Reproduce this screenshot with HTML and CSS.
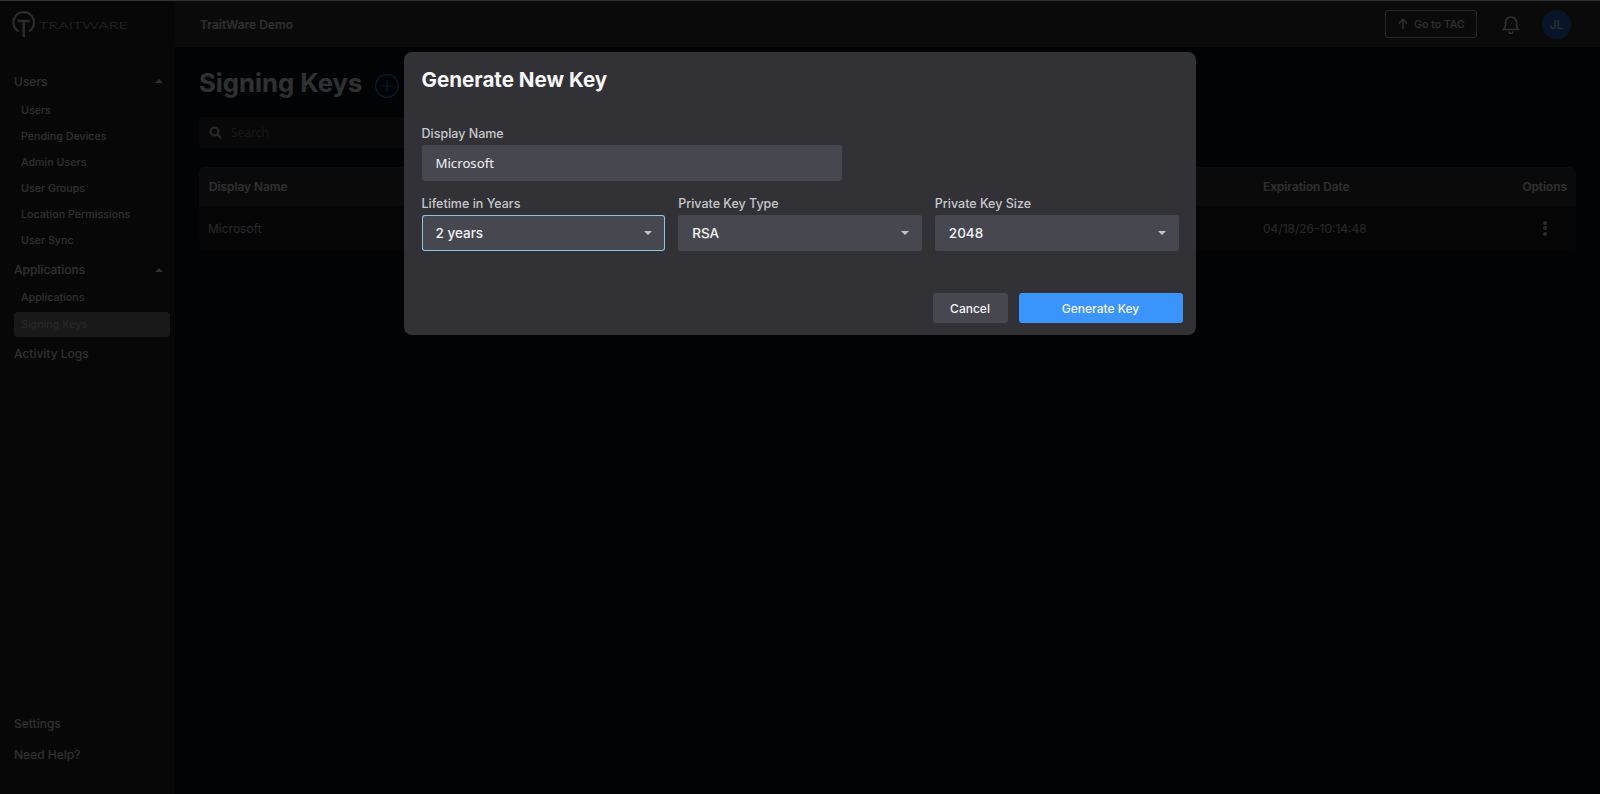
FILE: index.html
```html
<!DOCTYPE html>
<html lang="en">
<head>
<meta charset="utf-8">
<title>Signing Keys</title>
<link rel="stylesheet" href="styles.css">
</head>
<body>
<div class="app">
  <aside class="sidebar">
    <div class="logo">
      <svg class="logo-mark" width="25" height="28" viewBox="0 0 25 28" fill="none" stroke="currentColor">
        <path d="M6.600 20.400A10.300 10.300 0 1 1 16.800 20.400" stroke-width="2.200"/>
        <path d="M5.700 10H17.700M11.700 10V26" stroke-width="2.600"/>
      </svg>
      <span class="logo-text">TRAITWARE</span>
    </div>
    <nav class="nav">
      <div class="nav-head nav-head-first">Users<span class="caret"></span></div>
      <a class="nav-item">Users</a>
      <a class="nav-item">Pending Devices</a>
      <a class="nav-item">Admin Users</a>
      <a class="nav-item">User Groups</a>
      <a class="nav-item">Location Permissions</a>
      <a class="nav-item">User Sync</a>
      <div class="nav-head nav-head-next">Applications<span class="caret"></span></div>
      <a class="nav-item">Applications</a>
      <a class="nav-item nav-active">Signing Keys</a>
      <div class="nav-head nav-head-last">Activity Logs</div>
    </nav>
    <div class="nav-foot">
      <div class="nav-head">Settings</div>
      <div class="nav-head">Need Help?</div>
    </div>
  </aside>
  <div class="content">
    <header class="topbar">
      <span class="org">TraitWare Demo</span>
      <div class="top-actions">
        <button class="tac-btn">
          <svg width="12" height="12" viewBox="0 0 12 12" fill="none" stroke="currentColor" stroke-width="1.500"><path d="M6 11V1.500M1.800 5.500 6 1.300l4.200 4.200"/></svg>
          Go to TAC
        </button>
        <svg class="bell" width="20" height="20" viewBox="0 0 20 20" fill="none" stroke="currentColor" stroke-width="1.600"><path d="M2.500 15.500c1.500-1.500 2-2.500 2-5V8.500a5.500 5.500 0 0 1 11 0v2c0 2.500.5 3.500 2 5zM8 17.500a2 2 0 0 0 4 0"/></svg>
        <span class="avatar">JL</span>
      </div>
    </header>
    <main class="main">
      <div class="title-row">
        <h1 class="page-title">Signing Keys</h1>
        <svg class="add" width="24" height="24" viewBox="0 0 24 24" fill="none" stroke="currentColor" stroke-width="1.200"><circle cx="12" cy="12" r="11.300"/><path d="M12 6.500v11M6.500 12h11"/></svg>
      </div>
      <div class="search">
        <svg width="13" height="13" viewBox="0 0 13 13" fill="none" stroke="currentColor" stroke-width="2"><circle cx="5.500" cy="5.500" r="4"/><path d="m8.500 8.500 3.700 3.700"/></svg>
        <span>Search</span>
      </div>
      <div class="table">
        <div class="row row-head">
          <span class="col-name">Display Name</span>
          <span class="col-date">Expiration Date</span>
          <span class="col-opt">Options</span>
        </div>
        <div class="row row-body">
          <span class="col-name col-name-body">Microsoft</span>
          <span class="col-date">04/18/26-10:14:48</span>
          <span class="col-opt col-dots"><i></i><i></i><i></i></span>
        </div>
      </div>
    </main>
  </div>
</div>
<div class="overlay">
  <section class="modal">
    <h2 class="modal-title">Generate New Key</h2>
    <div class="field field-name">
      <label class="label">Display Name</label>
      <div class="input input-text">Microsoft</div>
    </div>
    <div class="select-grid">
      <div class="field">
        <label class="label">Lifetime in Years</label>
        <div class="input select focused">2 years<span class="arrow"></span></div>
      </div>
      <div class="field">
        <label class="label">Private Key Type</label>
        <div class="input select">RSA<span class="arrow"></span></div>
      </div>
      <div class="field">
        <label class="label">Private Key Size</label>
        <div class="input select">2048<span class="arrow"></span></div>
      </div>
    </div>
    <div class="modal-actions">
      <button class="btn btn-cancel">Cancel</button>
      <button class="btn btn-primary">Generate Key</button>
    </div>
  </section>
</div>
</body>
</html>
```
FILE: styles.css
```css
* { box-sizing: border-box; }
html, body { margin: 0; height: 100%; overflow: hidden; }
body {
  font-family: Inter, "Liberation Sans", sans-serif;
  background: #0c1119;
  color: #e8e8ee;
}
.app { display: flex; height: 794px; border-top: 1px solid #ffffff; }

/* sidebar */
.sidebar {
  width: 175px;
  flex: none;
  background: #232327;
  display: flex;
  flex-direction: column;
  padding: 0 5px 0 14px;
}
.logo { display: flex; align-items: center; gap: 2px; height: 46px; margin-left: -2px; margin-top: 1px; color: #d8d8de; }
.logo-mark { flex: none; }
.logo-text {
  font-family: Lato, sans-serif;
  font-weight: 300;
  font-size: 10.500px;
  transform: scaleX(1.540);
  transform-origin: left center;
}
.nav { display: flex; flex-direction: column; padding-top: 20px; }
.nav-head {
  display: flex;
  justify-content: space-between;
  align-items: center;
  height: 26px;
  font-size: 12px;
  font-weight: 500;
  padding-right: 7px;
}
.nav-head-first { margin-bottom: 3px; }
.nav-head-next { margin-top: 3px; height: 27px; margin-bottom: 1px; }
.nav-head-last { margin-top: 1px; height: 30px; }
.caret {
  width: 0;
  height: 0;
  border-left: 4px solid transparent;
  border-right: 4px solid transparent;
  border-bottom: 4px solid currentColor;
}
.nav-item {
  display: flex;
  align-items: center;
  height: 26px;
  padding-left: 7px;
  font-size: 10.700px;
  font-weight: 500;
  color: #e4e4ea;
}
.nav-active {
  background: #7e7e84;
  border-radius: 4px;
  color: #bcbcc2;
  height: 25px;
  margin-top: 2px;
}
.nav-foot { margin-top: auto; padding-bottom: 27px; display: flex; flex-direction: column; gap: 5px; }

/* top bar */
.content { flex: 1; min-width: 0; display: flex; flex-direction: column; }
.topbar {
  height: 46px;
  flex: none;
  background: #36363b;
  display: flex;
  align-items: center;
  justify-content: space-between;
  padding: 0 29px 0 25px;
  font-size: 13px;
}
.org { font-weight: 600; font-size: 12px; }
.top-actions { display: flex; align-items: center; }
.tac-btn {
  display: flex;
  align-items: center;
  gap: 5px;
  width: 92px;
  height: 28px;
  padding: 0 0 0 11px;
  background: transparent;
  border: 1px solid #b8b8be;
  border-radius: 3px;
  color: #e8e8ee;
  font: 500 10.600px Inter, sans-serif;
}
.bell { margin-left: 24px; color: #f0f0f4; }
.avatar {
  margin-left: 21px;
  width: 29px;
  height: 29px;
  border-radius: 50%;
  background: #1e6fc8;
  display: flex;
  align-items: center;
  justify-content: center;
  font-size: 12px;
  font-weight: 500;
  color: #f0f0f4;
}

/* main */
.main { padding: 19px 24px 0; flex: 1; }
.title-row { display: flex; align-items: center; gap: 13px; height: 36px; }
.page-title { margin: -4px 0 0; font-size: 25.700px; font-weight: 700; color: #f0f0f4; }
.add { color: #2e8cf0; margin-top: 4px; }
.search {
  display: flex;
  align-items: center;
  gap: 9px;
  width: 560px;
  height: 31px;
  margin-top: 15px;
  padding-left: 10px;
  background: #2a2a2f;
  border-radius: 4px;
  font: 12px "Noto Sans", sans-serif;
  color: #77777c;
}
.search svg { color: #cfcfd4; }
.table { margin-top: 19px; }
.row { display: flex; align-items: center; padding: 0 9px 0 10px; font-size: 12px; }
.row-head { height: 39px; background: #36363b; border-radius: 6px 6px 0 0; font-weight: 600; font-size: 11.800px; }
.row-body { height: 44px; background: #1d1d21; border-radius: 0 0 6px 6px; color: #c9c9cf; }
.col-name { flex: 1; }
.col-name-body { margin-left: -1px; }
.col-date { width: 254px; }
.col-opt { width: 50px; text-align: right; }
.col-dots { display: flex; flex-direction: column; align-items: center; gap: 1.500px; padding-left: 6px; width: 50px; }
.col-dots i { width: 4px; height: 4px; border-radius: 50%; background: #d8d8de; }

/* modal */
.overlay {
  position: fixed;
  inset: 0;
  background: rgba(0, 0, 0, 0.8);
  display: flex;
  justify-content: center;
  align-items: flex-start;
  padding-top: 52px;
}
.modal {
  width: 792px;
  height: 283px;
  padding: 15px 17.500px 0;
  background: #323236;
  border-radius: 8px;
  display: flex;
  flex-direction: column;
}
.modal-title { margin: 0; font-size: 20.600px; line-height: 26px; font-weight: 700; color: #f6f6f8; }
.field { display: flex; flex-direction: column; gap: 3px; }
.field-name { margin-top: 33px; width: 420px; }
.label { font-size: 12.500px; line-height: 16px; font-weight: 500; color: #c8c8cc; }
.input {
  height: 36px;
  padding: 0 14px;
  display: flex;
  align-items: center;
  justify-content: space-between;
  background: #47474f;
  border-radius: 3px;
  font-size: 13.500px;
  font-weight: 500;
  color: #f2f2f4;
}
.input-text { font-family: "Noto Sans", sans-serif; font-weight: 400; font-size: 13.200px; }
.select-grid { display: grid; grid-template-columns: repeat(3, 1fr); gap: 13px; margin-top: 15px; }
.focused { box-shadow: inset 0 0 0 1px #8fc6dc; }
.arrow {
  width: 0;
  height: 0;
  margin-right: -1px;
  border-left: 4px solid transparent;
  border-right: 4px solid transparent;
  border-top: 4px solid #c4c4ca;
}
.modal-actions { display: flex; justify-content: flex-end; gap: 11px; margin-top: 42px; margin-right: -4px; }
.btn {
  height: 30px;
  border: 0;
  border-radius: 3px;
  font: 500 12px Inter, sans-serif;
  color: #f4f4f6;
}
.btn-cancel { width: 75px; background: #47474f; }
.btn-primary { width: 164px; background: #3a94fb; }
```
